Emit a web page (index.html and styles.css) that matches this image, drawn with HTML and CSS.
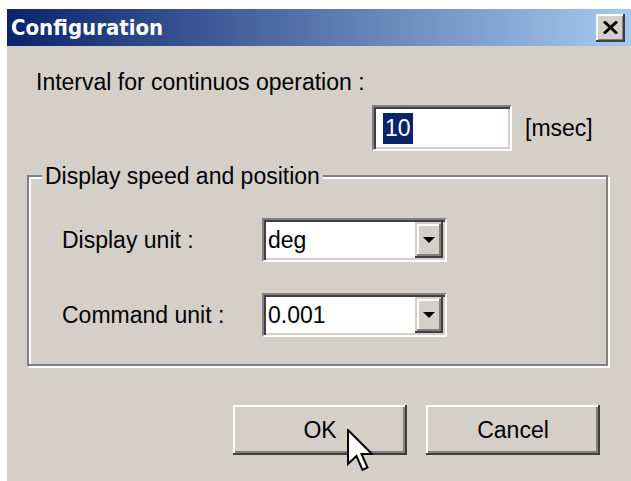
FILE: index.html
```html
<!DOCTYPE html>
<html lang="en">
<head>
<meta charset="utf-8">
<title>Configuration</title>
<link rel="stylesheet" href="styles.css">
</head>
<body>
<div class="window">
  <div class="titlebar">
    <span class="title">Configuration</span>
    <span class="close">
      <svg width="15" height="13" viewBox="0 0 15 13"><path d="M1 0.5 L14 12.5 M14 0.5 L1 12.5" stroke="#000" stroke-width="3" fill="none"/></svg>
    </span>
  </div>

  <div class="content">
    <div class="interval-label">Interval for continuos operation :</div>
    <div class="interval-row">
      <div class="edit"><span class="sel">10</span></div>
      <span class="unit">[msec]</span>
    </div>

    <fieldset class="group">
      <legend>Display speed and position</legend>
      <div class="field-rows">
        <label class="field-label">Display unit :</label>
        <div class="combo"><span class="combo-value">deg</span><span class="combo-btn"><i class="arrow"></i></span></div>
        <label class="field-label">Command unit :</label>
        <div class="combo"><span class="combo-value">0.001</span><span class="combo-btn"><i class="arrow"></i></span></div>
      </div>
    </fieldset>

    <div class="buttons">
      <button class="btn">OK</button>
      <button class="btn">Cancel</button>
    </div>
  </div>

  <svg class="cursor" width="26" height="44" viewBox="0 0 26 44">
    <polygon points="1,1 1,35 9.5,27 15.5,41 20.5,38.5 14.5,25 25,25" fill="#fff" stroke="#000" stroke-width="2" stroke-linejoin="miter"/>
  </svg>
</div>
</body>
</html>
```

FILE: styles.css
```css
html, body {
  margin: 0;
  padding: 0;
  background: #fff;
  overflow: hidden;
}

.window {
  position: relative;
  margin: 9px 0 0 7px;
  width: 624px;
  height: 472px;
  background: #d4d0c8;
  overflow: hidden;
  font-family: "Liberation Sans", Arial, sans-serif;
  font-size: 23px;
  color: #000;
}

/* caption bar */
.titlebar {
  height: 37px;
  display: flex;
  align-items: center;
  justify-content: space-between;
  padding: 0 6px 0 4px;
  background: linear-gradient(90deg, #0a246a 0%, #a6caf0 100%);
}

.title {
  color: #fff;
  font-family: "DejaVu Sans Condensed", "DejaVu Sans", sans-serif;
  font-stretch: condensed;
  font-weight: bold;
  font-size: 22px;
}

.close {
  width: 29px;
  height: 28px;
  box-sizing: border-box;
  display: flex;
  align-items: center;
  justify-content: center;
  background: #d4d0c8;
  box-shadow: inset -2px -2px 0 #404040, inset 2px 2px 0 #fff, inset -3px -3px 0 #808080;
}

/* dialog body */
.content {
  padding-top: 22px;
}

.interval-label {
  margin-left: 29px;
  line-height: 28px;
}

.interval-row {
  display: flex;
  align-items: center;
  gap: 13px;
  margin: 9px 0 0 365px;
}

.edit,
.combo {
  box-sizing: border-box;
  background: #fff;
  border: 2px solid;
  border-color: #808080 #fff #fff #808080;
  box-shadow: inset 2px 2px 0 #404040, inset -2px -2px 0 #d4d0c8;
}

.edit {
  width: 140px;
  height: 46px;
  display: flex;
  align-items: center;
  padding-left: 9px;
}

.sel {
  background: #0a246a;
  color: #fff;
  line-height: 31px;
  padding: 0 2px;
}

.unit {
  line-height: 28px;
}

/* group box */
.group {
  box-sizing: border-box;
  margin: 11px 0 0 20px;
  width: 581px;
  height: 204px;
  padding: 28px 0 0 13px;
  border: 2px solid #808080;
  box-shadow: inset 2px 2px 0 #fff, 2px 2px 0 #fff;
}

.group legend {
  margin-left: 0;
  padding: 0 3px;
  line-height: 28px;
  background: #d4d0c8;
}

.field-rows {
  display: grid;
  grid-template-columns: 200px 185px;
  row-gap: 31px;
  align-items: center;
  margin-left: 20px;
}

.field-label {
  line-height: 28px;
}

.combo {
  width: 185px;
  height: 44px;
  padding: 2px;
  display: flex;
}

.combo-value {
  flex: 1;
  padding-left: 2px;
  line-height: 36px;
}

.combo-btn {
  width: 28px;
  height: 36px;
  display: flex;
  align-items: center;
  justify-content: center;
  background: #d4d0c8;
  box-shadow: inset -2px -2px 0 #404040, inset 2px 2px 0 #d4d0c8, inset -4px -4px 0 #808080, inset 4px 4px 0 #fff;
}

.arrow {
  width: 0;
  height: 0;
  border-left: 6px solid transparent;
  border-right: 6px solid transparent;
  border-top: 6px solid #000;
}

/* push buttons */
.buttons {
  display: flex;
  gap: 19px;
  margin: 39px 0 0 226px;
}

.btn {
  width: 174px;
  height: 50px;
  border: 0;
  padding: 0;
  background: #d4d0c8;
  font-family: "Liberation Sans", Arial, sans-serif;
  font-size: 23px;
  color: #000;
  box-shadow: inset -2px -2px 0 #404040, inset 2px 2px 0 #fff, inset -4px -4px 0 #808080;
}

/* mouse pointer resting on OK */
.cursor {
  position: absolute;
  left: 340px;
  top: 420px;
}
```
